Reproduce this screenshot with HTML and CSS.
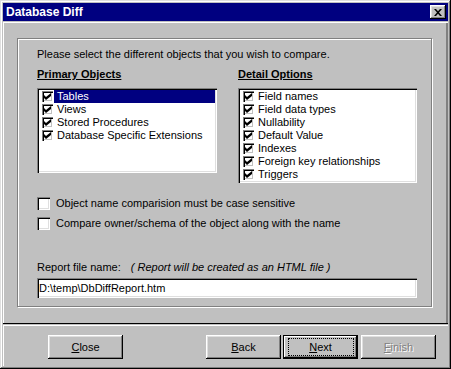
FILE: index.html
```html
<!DOCTYPE html>
<html lang="en">
<head>
    <meta charset="UTF-8">
    <title>Database Diff</title>
    <link rel="stylesheet" href="styles.css">
</head>
<body>
    <div class="window">
        <!-- Title bar -->
        <div class="titlebar">
            <span class="title">Database Diff</span>
            <span class="title-close">
                <svg width="8" height="7" viewBox="0 0 8 7"><path d="M0 0h2l2 2.2L6 0h2L5 3.5 8 7H6L4 4.8 2 7H0l3-3.5z" fill="#000"/></svg>
            </span>
        </div>

        <!-- Wizard page -->
        <div class="page">
            <div class="frame">
                <p class="intro">Please select the different objects that you wish to compare.</p>

                <div class="columns">
                    <div class="column">
                        <h2 class="heading">Primary Objects</h2>
                        <ul class="checklist primary">
                            <li class="selected"><span class="tick"><svg width="7" height="7" viewBox="0 0 7 7"><path d="M0 2l2 2 5-4v3L2 7 0 5z"/></svg></span><span class="label">Tables</span></li>
                            <li><span class="tick"><svg width="7" height="7" viewBox="0 0 7 7"><path d="M0 2l2 2 5-4v3L2 7 0 5z"/></svg></span><span class="label">Views</span></li>
                            <li><span class="tick"><svg width="7" height="7" viewBox="0 0 7 7"><path d="M0 2l2 2 5-4v3L2 7 0 5z"/></svg></span><span class="label">Stored Procedures</span></li>
                            <li><span class="tick"><svg width="7" height="7" viewBox="0 0 7 7"><path d="M0 2l2 2 5-4v3L2 7 0 5z"/></svg></span><span class="label">Database Specific Extensions</span></li>
                        </ul>
                    </div>
                    <div class="column">
                        <h2 class="heading">Detail Options</h2>
                        <ul class="checklist detail">
                            <li><span class="tick"><svg width="7" height="7" viewBox="0 0 7 7"><path d="M0 2l2 2 5-4v3L2 7 0 5z"/></svg></span><span class="label">Field names</span></li>
                            <li><span class="tick"><svg width="7" height="7" viewBox="0 0 7 7"><path d="M0 2l2 2 5-4v3L2 7 0 5z"/></svg></span><span class="label">Field data types</span></li>
                            <li><span class="tick"><svg width="7" height="7" viewBox="0 0 7 7"><path d="M0 2l2 2 5-4v3L2 7 0 5z"/></svg></span><span class="label">Nullability</span></li>
                            <li><span class="tick"><svg width="7" height="7" viewBox="0 0 7 7"><path d="M0 2l2 2 5-4v3L2 7 0 5z"/></svg></span><span class="label">Default Value</span></li>
                            <li><span class="tick"><svg width="7" height="7" viewBox="0 0 7 7"><path d="M0 2l2 2 5-4v3L2 7 0 5z"/></svg></span><span class="label">Indexes</span></li>
                            <li><span class="tick"><svg width="7" height="7" viewBox="0 0 7 7"><path d="M0 2l2 2 5-4v3L2 7 0 5z"/></svg></span><span class="label">Foreign key relationships</span></li>
                            <li><span class="tick"><svg width="7" height="7" viewBox="0 0 7 7"><path d="M0 2l2 2 5-4v3L2 7 0 5z"/></svg></span><span class="label">Triggers</span></li>
                        </ul>
                    </div>
                </div>

                <label class="option"><span class="checkbox"></span>Object name comparision must be case sensitive</label>
                <label class="option second"><span class="checkbox"></span>Compare owner/schema of the object along with the name</label>

                <p class="report-label">Report file name: <em>( Report will be created as an HTML file )</em></p>
                <div class="textbox">D:\temp\DbDiffReport.htm</div>
            </div>
        </div>

        <!-- Wizard buttons -->
        <div class="buttons">
            <button class="btn"><u>C</u>lose</button>
            <div class="nav">
                <button class="btn"><u>B</u>ack</button>
                <button class="btn default"><span class="focus"><u>N</u>ext</span></button>
                <button class="btn disabled"><u>F</u>inish</button>
            </div>
        </div>
    </div>
</body>
</html>
```

FILE: styles.css
```css
/* Reset */
* {
    box-sizing: border-box;
}

body {
    margin: 0;
    font-family: 'Liberation Sans', Arial, sans-serif;
    font-size: 11px;
    line-height: 13px;
    color: #000;
    background-color: #c0c0c0;
}

/* Dialog window with the classic raised edge */
.window {
    width: 451px;
    height: 369px;
    padding: 3px;
    display: flex;
    flex-direction: column;
    gap: 1px;
    background-color: #c0c0c0;
    box-shadow: inset -1px -1px #000, inset 1px 1px #dfdfdf, inset -2px -2px #808080, inset 2px 2px #fff;
}

/* Title bar */
.titlebar {
    height: 18px;
    flex-shrink: 0;
    display: flex;
    align-items: center;
    justify-content: space-between;
    padding: 0 2px 0 3px;
    background-color: #000080;
    color: #fff;
}

.title {
    font-size: 12px;
    font-weight: bold;
}

.title-close {
    width: 16px;
    height: 14px;
    display: flex;
    align-items: center;
    justify-content: center;
    background-color: #c0c0c0;
    box-shadow: inset -1px -1px #000, inset 1px 1px #fff, inset -2px -2px #808080, inset 2px 2px #dfdfdf;
}

/* Upper wizard page */
.page {
    height: 302px;
    flex-shrink: 0;
    padding: 16px 0 0 14px;
    border-bottom: 1px solid #000;
    box-shadow: inset 1px 1px #fff, inset -2px 0 #808080;
}

/* Etched frame around the options */
.frame {
    width: 415px;
    height: 269px;
    padding: 9px 14px 0 19px;
    border: 1px solid #808080;
    box-shadow: 1px 1px #fff, inset 1px 1px #fff;
}

.intro {
    margin: 0 0 7px;
}

.columns {
    display: flex;
    gap: 21px;
    align-items: flex-start;
}

.column {
    display: flex;
    flex-direction: column;
    gap: 7px;
}

.column:first-child {
    width: 180px;
}

.column:last-child {
    width: 179px;
}

.heading {
    margin: 0;
    font-size: 11px;
    font-weight: bold;
    text-decoration: underline;
}

/* Check list boxes */
.checklist {
    margin: 0;
    padding: 2px;
    list-style: none;
    background-color: #fff;
    box-shadow: inset 1px 1px #808080, inset 2px 2px #000, inset -1px -1px #fff, inset -2px -2px #dfdfdf;
}

.checklist.primary {
    height: 85px;
}

.checklist.detail {
    height: 95px;
}

.checklist li {
    height: 13px;
    display: flex;
    align-items: center;
}

.tick {
    width: 11px;
    height: 11px;
    margin-left: 3px;
    display: flex;
    align-items: center;
    justify-content: center;
    background-color: #fff;
    box-shadow: inset 1px 1px #808080, inset 2px 2px #000, inset -1px -1px #fff, inset -2px -2px #c0c0c0;
}

.tick svg {
    fill: #000;
}

.label {
    flex: 1;
    height: 13px;
    margin-left: 1px;
    padding-left: 3px;
    white-space: nowrap;
}

.selected .label {
    background-color: #000080;
    color: #fff;
}

/* Standalone check boxes */
.option {
    height: 13px;
    margin-top: 14px;
    display: flex;
    align-items: center;
    gap: 6px;
}

.option.second {
    margin-top: 7px;
}

.checkbox {
    width: 13px;
    height: 13px;
    background-color: #fff;
    box-shadow: inset 1px 1px #808080, inset 2px 2px #000, inset -1px -1px #fff, inset -2px -2px #dfdfdf;
}

/* Report file */
.report-label {
    margin: 31px 0 4px;
}

.report-label em {
    margin-left: 7px;
}

.textbox {
    width: 380px;
    height: 20px;
    padding: 4px 2px 0;
    background-color: #fff;
    box-shadow: inset 1px 1px #808080, inset 2px 2px #000, inset -1px -1px #fff, inset -2px -2px #dfdfdf;
}

/* Bottom button row */
.buttons {
    flex: 1;
    display: flex;
    justify-content: space-between;
    align-items: flex-start;
    padding: 10px 12px 0 45px;
    box-shadow: inset 1px 1px #fff;
}

.nav {
    display: flex;
    gap: 2px;
}

.btn {
    width: 75px;
    height: 24px;
    padding: 0;
    border: none;
    display: flex;
    align-items: center;
    justify-content: center;
    font-family: inherit;
    font-size: 11px;
    color: #000;
    background-color: #c0c0c0;
    box-shadow: inset -1px -1px #000, inset 1px 1px #fff, inset -2px -2px #808080, inset 2px 2px #dfdfdf;
}

.btn.default {
    box-shadow: inset 0 0 0 1px #000, inset -2px -2px #000, inset 2px 2px #fff, inset -3px -3px #808080;
}

.focus {
    width: 66px;
    height: 18px;
    display: flex;
    align-items: center;
    justify-content: center;
    border: 1px dotted #000;
}

.btn.disabled {
    margin-left: 1px;
    color: #808080;
    text-shadow: 1px 1px #fff;
}
```
